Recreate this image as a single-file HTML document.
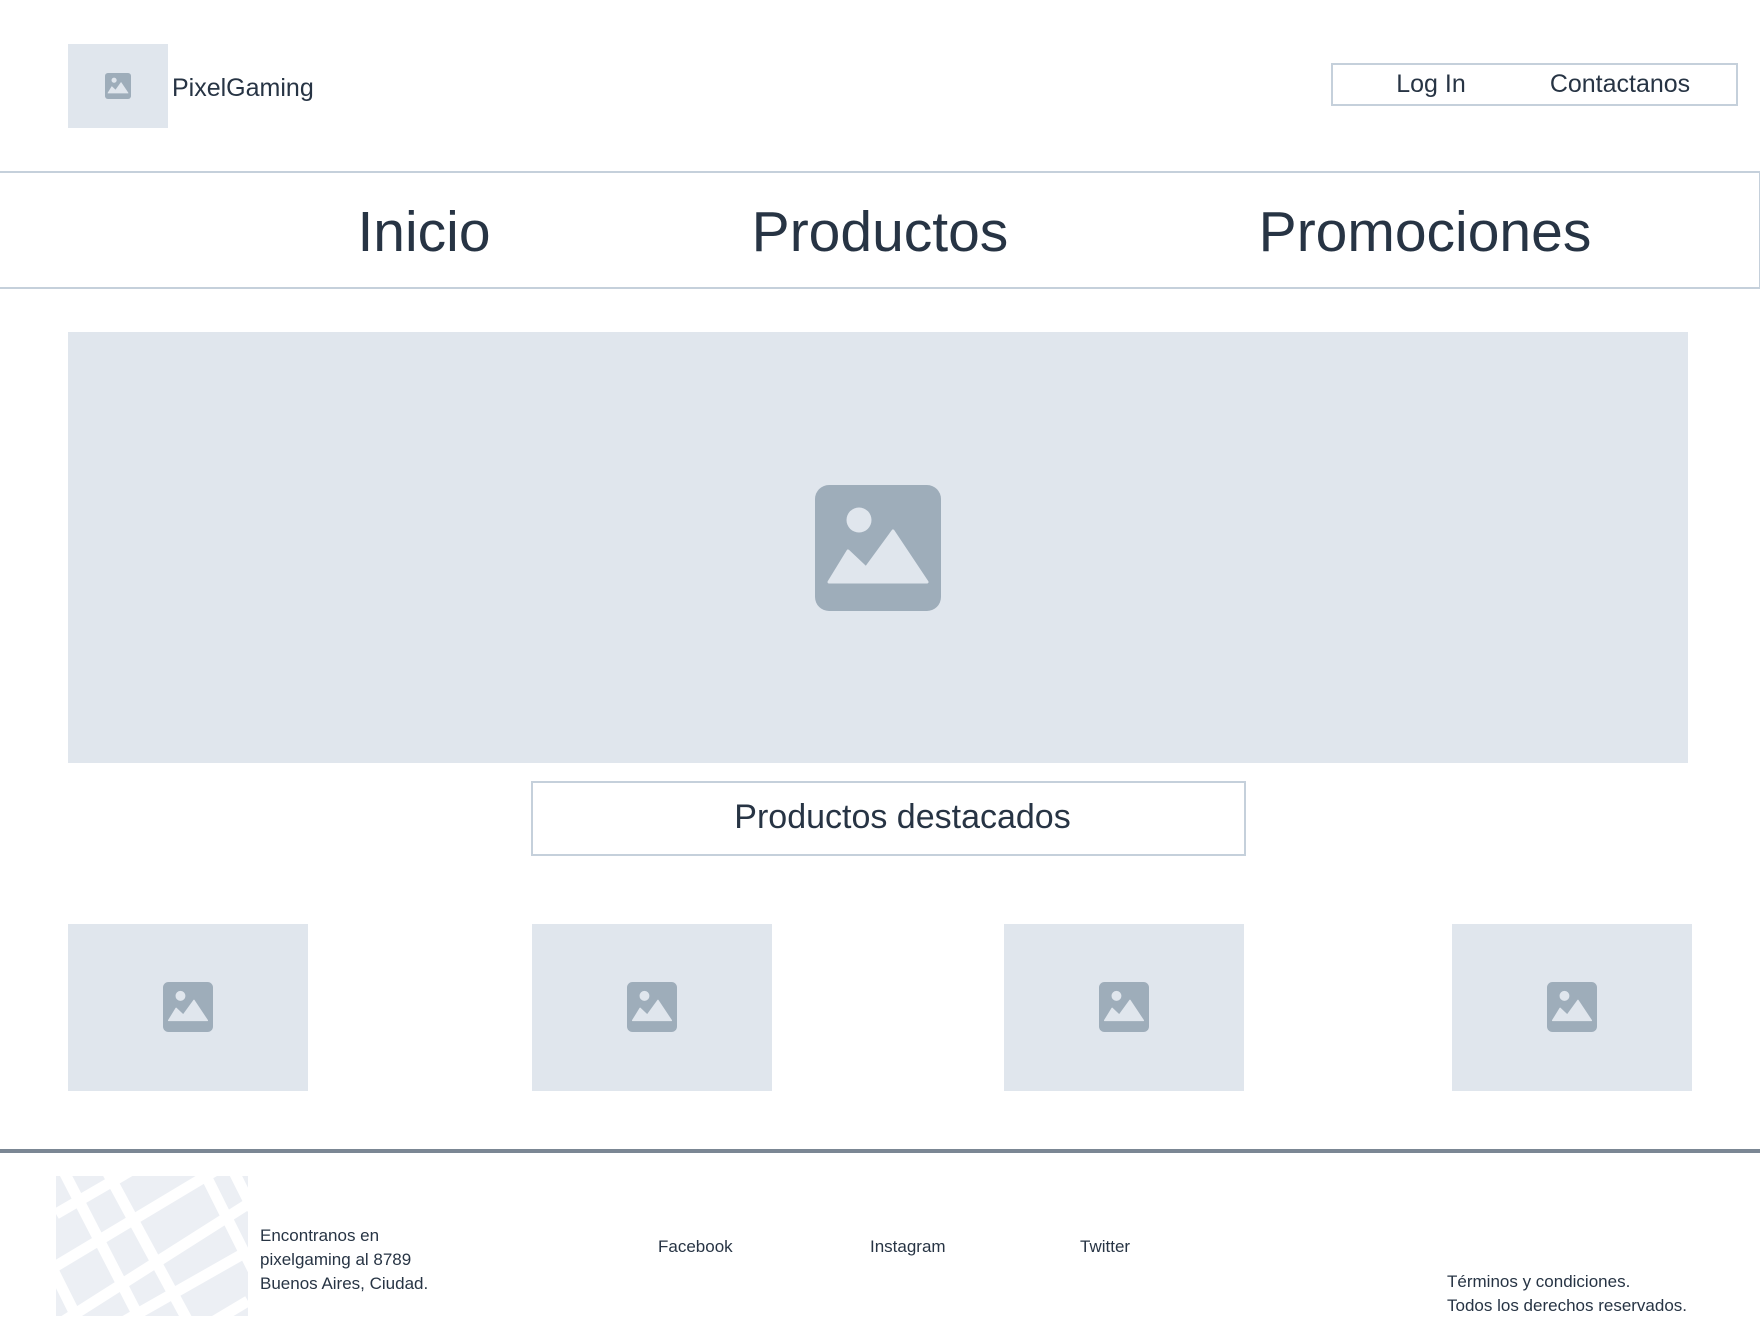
<!DOCTYPE html>
<html><head><meta charset="utf-8"><style>
body{margin:0;width:1760px;height:1336px;position:relative;background:#fff;font-family:"Liberation Sans",sans-serif;color:#273444;overflow:hidden}
.a{position:absolute}
.ph{position:absolute;background:#e0e6ed}
.t{position:absolute;white-space:nowrap}
</style></head><body>
<svg width="0" height="0" style="position:absolute"><defs><symbol id="ic" viewBox="0 0 126 126"><rect width="126" height="126" rx="14" fill="#9eadba"/><circle cx="44" cy="35" r="12.5" fill="#e0e6ed"/><path d="M14 97 L33 66 L51 83 L78 46 L112 97 Z" fill="#e0e6ed" stroke="#e0e6ed" stroke-width="3" stroke-linejoin="round"/></symbol></defs></svg>

<div class="ph" style="left:68px;top:44px;width:100px;height:84px"><svg class="a" style="left:37px;top:29px" width="26" height="26"><use href="#ic"/></svg></div>
<div class="t" style="left:172px;top:74px;font-size:25px">PixelGaming</div>

<div class="a" style="left:1331px;top:63px;width:403px;height:39px;border:2px solid #c5d0db"></div>
<div class="t" style="left:1331px;width:200px;text-align:center;top:70px;font-size:25px">Log In</div>
<div class="t" style="left:1520px;width:200px;text-align:center;top:70px;font-size:25px">Contactanos</div>

<div class="a" style="left:-2px;top:171px;width:1759px;height:114px;border:2px solid #c5d0db"></div>
<div class="t" style="left:274px;width:300px;text-align:center;top:199px;font-size:57px">Inicio</div>
<div class="t" style="left:730px;width:300px;text-align:center;top:199px;font-size:57px">Productos</div>
<div class="t" style="left:1225px;width:400px;text-align:center;top:199px;font-size:57px">Promociones</div>

<div class="ph" style="left:68px;top:332px;width:1620px;height:431px"><svg class="a" style="left:747px;top:153px" width="126" height="126"><use href="#ic"/></svg></div>

<div class="a" style="left:531px;top:781px;width:711px;height:71px;border:2px solid #c5d0db"></div>
<div class="t" style="left:545px;width:715px;text-align:center;top:798px;font-size:34px">Productos destacados</div>

<div class="ph" style="left:68px;top:924px;width:240px;height:167px"><svg class="a" style="left:95px;top:58px" width="50" height="50"><use href="#ic"/></svg></div>
<div class="ph" style="left:532px;top:924px;width:240px;height:167px"><svg class="a" style="left:95px;top:58px" width="50" height="50"><use href="#ic"/></svg></div>
<div class="ph" style="left:1004px;top:924px;width:240px;height:167px"><svg class="a" style="left:95px;top:58px" width="50" height="50"><use href="#ic"/></svg></div>
<div class="ph" style="left:1452px;top:924px;width:240px;height:167px"><svg class="a" style="left:95px;top:58px" width="50" height="50"><use href="#ic"/></svg></div>

<div class="a" style="left:0;top:1149px;width:1760px;height:4px;background:#7b8794"></div>

<svg class="a" style="left:56px;top:1176px" width="192" height="140" viewBox="0 0 192 140"><rect width="192" height="140" fill="#eceff4"/><g stroke="#fff" stroke-width="11" fill="none"><path d="M0 38 L100 -20 M0 90 L192 -25 M0 150 L192 28 M60 150 L192 75 M150 150 L192 125"/><path d="M5 -10 L90 155 M48 -10 L140 160 M145 -10 L220 140 M-30 40 L30 160 M175 -10 L200 40"/></g></svg>
<div class="t" style="left:260px;top:1224px;font-size:17px;line-height:24px">Encontranos en<br>pixelgaming al 8789<br>Buenos Aires, Ciudad.</div>

<div class="t" style="left:658px;top:1237px;font-size:17px">Facebook</div>
<div class="t" style="left:870px;top:1237px;font-size:17px">Instagram</div>
<div class="t" style="left:1080px;top:1237px;font-size:17px">Twitter</div>
<div class="t" style="left:1447px;top:1270px;font-size:17px;line-height:24px">Términos y condiciones.<br>Todos los derechos reservados.</div>
</body></html>
